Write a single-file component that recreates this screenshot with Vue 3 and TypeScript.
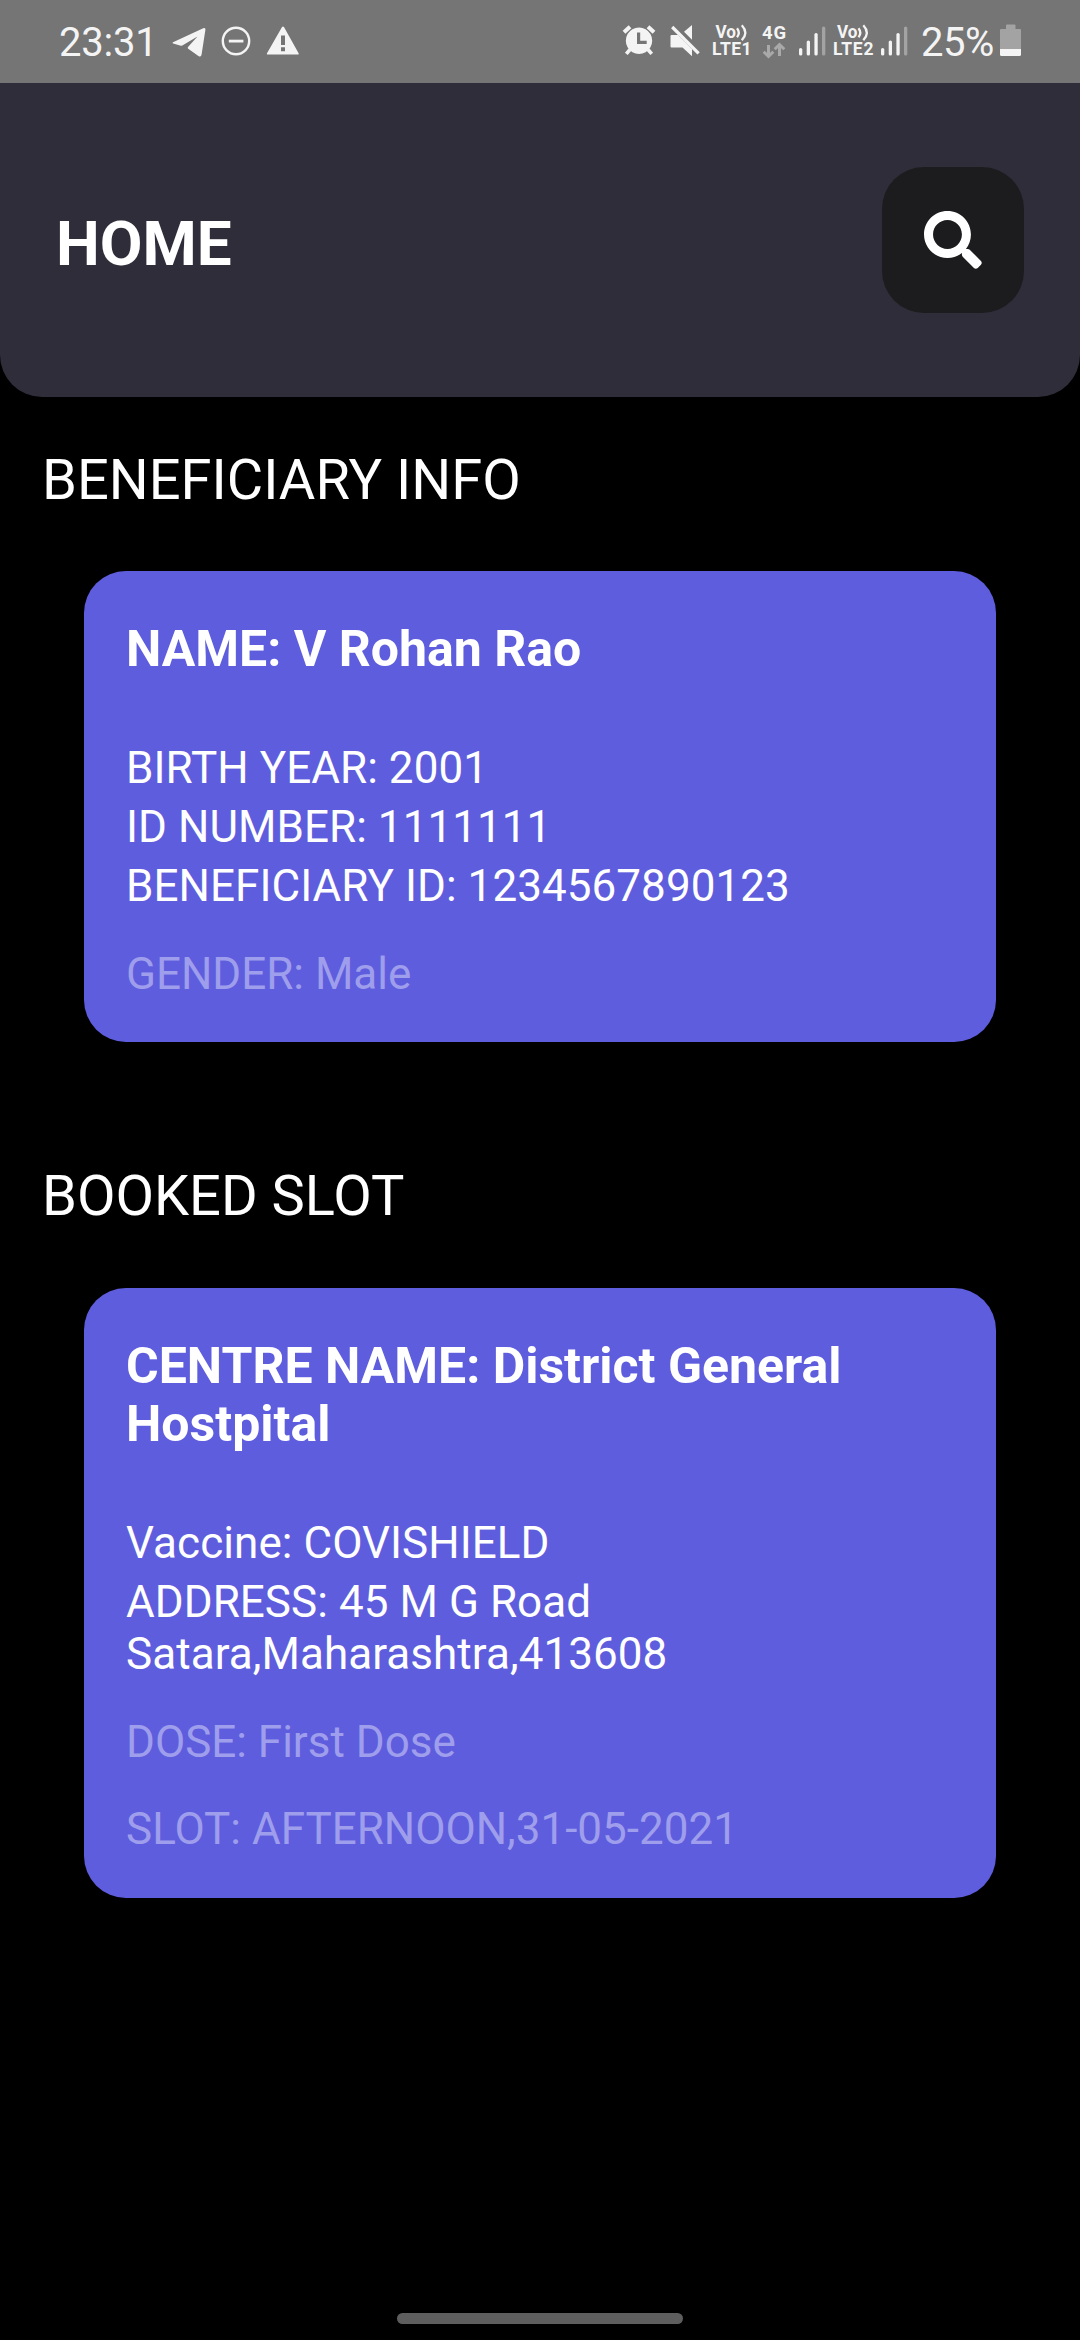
<script setup lang="ts">
interface Card {
  section: string
  title: string[]
  lines: string[]
  notes: string[]
}

const cards: Card[] = [
  {
    section: 'BENEFICIARY INFO',
    title: ['NAME: V Rohan Rao'],
    lines: ['BIRTH YEAR: 2001', 'ID NUMBER: 1111111', 'BENEFICIARY ID: 1234567890123'],
    notes: ['GENDER: Male'],
  },
  {
    section: 'BOOKED SLOT',
    title: ['CENTRE NAME: District General', 'Hostpital'],
    lines: ['Vaccine: COVISHIELD', 'ADDRESS: 45 M G Road\nSatara,Maharashtra,413608'],
    notes: ['DOSE: First Dose', 'SLOT: AFTERNOON,31-05-2021'],
  },
]

const bars = [
  { x: 1, y: 24, on: true },
  { x: 8.7, y: 16.5, on: true },
  { x: 16.4, y: 9, on: true },
  { x: 24, y: 2.5, on: false },
]
</script>

<template>
  <div class="screen">
    <div class="status">
      <span class="clock">23:31</span>
      <svg class="telegram" width="34" height="32" viewBox="0 0 34 32">
        <path d="M1 17.2L31.2 3.2Q33.7 2.2 33.4 4.8L29.6 29.6Q29 32.6 26.4 30.9L16.2 23.8Q15.2 22.9 16 21.9L25.5 11.5L10.3 20.4Q9.2 21 8 20.6L1.2 18.6Q-.2 18 1 17.2Z" />
      </svg>
      <svg class="dnd" width="30" height="30" viewBox="0 0 30 30">
        <circle cx="15" cy="15" r="13.2" fill="none" stroke="#f4f4f4" stroke-width="2.4" />
        <path d="M7.8 13.7h14.6v2.8H7.8z" />
      </svg>
      <svg class="warn" width="34" height="30" viewBox="0 0 34 30">
        <path fill-rule="evenodd" d="M1.4 29.4Q.4 29.4 1 28.2L15.9 2.3Q17 .7 18.1 2.3L32.6 28.2Q33.2 29.4 32.2 29.4ZM15 10.5V20h4v-9.500zM15 22.200v4h4v-4z" />
      </svg>
      <span class="spacer"></span>
      <svg class="alarm" width="34" height="34" viewBox="0 0 34 34">
        <path fill-rule="evenodd" d="M17 4.500a13.200 13.200 0 1 0 .01 0ZM15 9.500h3.200v8.200h6.500v3.200H15z" />
        <path d="M2 9.200L8 3.700M26 3.700L32 9.200" stroke="#f4f4f4" stroke-width="4" />
        <path d="M8 26.500L4.300 30.800M26 26.500L29.700 30.800" stroke="#f4f4f4" stroke-width="3.600" />
      </svg>
      <svg class="mute" width="30" height="34" viewBox="0 0 30 34">
        <path d="M14 8.800L22 2v14.800zM1.500 12H8l14 14v7.200L12.500 24.500h-11Q.5 24.500.5 23.500V13Q.5 12 1.500 12Z" />
        <path d="M2.200 4L28.600 30.400" stroke="#f4f4f4" stroke-width="3.200" />
      </svg>
      <svg class="volte" width="42" height="34" viewBox="0 0 42 34">
        <text x="3.500" y="14.800" font-size="17.500" font-weight="700" textLength="20.500" lengthAdjust="spacingAndGlyphs">Vo</text>
        <path d="M25 5.200q3.600 4.500 0 9M29.800 2.200q7 7.500 0 15" fill="none" stroke="#f4f4f4" stroke-width="2.300" />
        <text x="0" y="32" font-size="17.500" font-weight="700" textLength="39.500">LTE1</text>
      </svg>
      <svg class="net" width="24" height="36" viewBox="0 0 24 36">
        <text x="0" y="16" font-size="18.500" font-weight="700" textLength="24">4G</text>
        <path d="M6.500 22v11M1.700 28.700l4.800 4.800 4.800-4.800M17.500 33V22M12.700 26.300l4.800-4.800 4.800 4.800" fill="none" stroke="#a9a9a9" stroke-width="3" />
      </svg>
      <svg class="signal" width="28" height="34" viewBox="0 0 28 34">
        <rect v-for="b in bars" :key="b.x" :x="b.x" :y="b.y" width="3.300" :height="31.500 - b.y" rx="1.600" :fill="b.on ? '#f4f4f4' : '#a3a3a3'" />
      </svg>
      <svg class="volte second" width="42" height="34" viewBox="0 0 42 34">
        <text x="4" y="14.800" font-size="17.500" font-weight="700" textLength="20.500" lengthAdjust="spacingAndGlyphs">Vo</text>
        <path d="M25.500 5.200q3.600 4.500 0 9M30.300 2.200q7 7.500 0 15" fill="none" stroke="#f4f4f4" stroke-width="2.300" />
        <text x="0" y="32" font-size="17.500" font-weight="700" textLength="40.500">LTE2</text>
      </svg>
      <svg class="signal" width="28" height="34" viewBox="0 0 28 34">
        <rect v-for="b in bars" :key="b.x" :x="b.x" :y="b.y" width="3.300" :height="31.500 - b.y" rx="1.600" :fill="b.on ? '#f4f4f4' : '#a3a3a3'" />
      </svg>
      <span class="percent">25%</span>
      <svg class="battery" width="21" height="32" viewBox="0 0 21 32">
        <path d="M6 5V1.500Q6 .5 7 .5h7.500q1 0 1 1V5H20q1 0 1 1v19H0V6q0-1 1-1z" fill="#a3a3a3" />
        <path d="M0 25h21v5.500Q21 32 19.500 32h-18Q0 32 0 30.500z" />
      </svg>
    </div>

    <header class="header">
      <h1>HOME</h1>
      <button class="search" aria-label="Search">
        <svg width="57.750" height="57.750" viewBox="0 0 512 512">
          <path d="M505 442.700L405.300 343c-4.500-4.500-10.600-7-17-7H372c27.600-35.300 44-79.700 44-128C416 93.100 322.900 0 208 0S0 93.100 0 208s93.100 208 208 208c48.300 0 92.700-16.400 128-44v16.300c0 6.400 2.500 12.500 7 17l99.700 99.700c9.400 9.400 24.600 9.400 33.900 0l28.300-28.300c9.400-9.400 9.400-24.600.1-34zM208 336c-70.700 0-128-57.200-128-128 0-70.700 57.200-128 128-128 70.700 0 128 57.200 128 128 0 70.700-57.200 128-128 128z" />
        </svg>
      </button>
    </header>

    <main>
      <section v-for="card in cards" :key="card.section">
        <h2>{{ card.section }}</h2>
        <article class="card">
          <h3><span v-for="t in card.title" :key="t">{{ t }}</span></h3>
          <p v-for="line in card.lines" :key="line" class="line">{{ line }}</p>
          <p v-for="note in card.notes" :key="note" class="note">{{ note }}</p>
        </article>
      </section>
    </main>

    <footer><div class="pill"></div></footer>
  </div>
</template>

<style>
body {
  background: #000;
}
</style>

<style scoped>
.screen {
  width: 1080px;
  height: 2340px;
  display: flex;
  flex-direction: column;
  overflow: hidden;
  background: #000;
  color: #fff;
  font-family: Roboto, "Noto Sans", sans-serif;
}
h1, h2, h3, p {
  margin: 0;
  font-weight: 400;
}
.status {
  box-sizing: border-box;
  height: 83px;
  flex: none;
  display: flex;
  align-items: flex-start;
  padding: 0 59px;
  background: #757575;
  color: #f4f4f4;
  font-size: 40px;
  line-height: 46px;
}
.status svg {
  flex: none;
  fill: #f4f4f4;
  overflow: visible;
}
.clock {
  width: 112.500px;
  margin-top: 20px;
  letter-spacing: -0.200px;
}
.telegram { margin-top: 24.500px; }
.dnd { margin: 25.500px 0 0 15.500px; }
.warn { margin: 24.500px 0 0 14.500px; }
.spacer { flex: 1; }
.alarm { margin: 23px 14.500px 0 0; }
.mute { margin: 23px 12px 0 0; }
.volte { margin: 23px 7.500px 0 0; }
.net { margin: 23px 12.500px 0 0; }
.signal { margin: 24px 7px 0 0; }
.volte.second { margin-right: 5px; }
.percent {
  width: 79px;
  margin: 20px 0 0 6px;
  letter-spacing: -0.500px;
}
.battery { margin-top: 24px; }

.header {
  box-sizing: border-box;
  height: 314px;
  flex: none;
  display: flex;
  justify-content: space-between;
  align-items: center;
  padding: 0 56px;
  background: #2e2d39;
  border-radius: 0 0 42px 42px;
}
h1 {
  font-size: 62px;
  line-height: 74px;
  font-weight: 700;
  padding-top: 8px;
}
.search {
  width: 142px;
  height: 146px;
  display: flex;
  align-items: center;
  justify-content: center;
  padding: 0;
  border: 0;
  border-radius: 42px;
  background: #1c1c1e;
}
.search svg {
  fill: #fff;
}
h2 {
  font-size: 56px;
  line-height: 66px;
  padding: 50px 0 58px 42px;
}
.card {
  margin: 0 84px;
  padding: 49px 42px 42.500px;
  border-radius: 42px;
  background: #5e5dde;
}
h3 {
  font-size: 50px;
  line-height: 58px;
  font-weight: 700;
  margin-bottom: 64px;
}
h3 span {
  display: block;
}
.line {
  font-size: 44px;
  line-height: 52px;
  letter-spacing: 0.060px;
  white-space: pre-line;
}
.line + .line {
  margin-top: 7px;
}
.note {
  margin-top: 35.500px;
  font-size: 44px;
  line-height: 52px;
  color: #9f9eec;
}
section + section h2 {
  padding-top: 121px;
  padding-bottom: 59px;
}
footer {
  margin-top: auto;
  display: flex;
  justify-content: center;
  padding-bottom: 16px;
}
.pill {
  width: 286px;
  height: 11px;
  border-radius: 6px;
  background: #5e5e5e;
}
</style>
